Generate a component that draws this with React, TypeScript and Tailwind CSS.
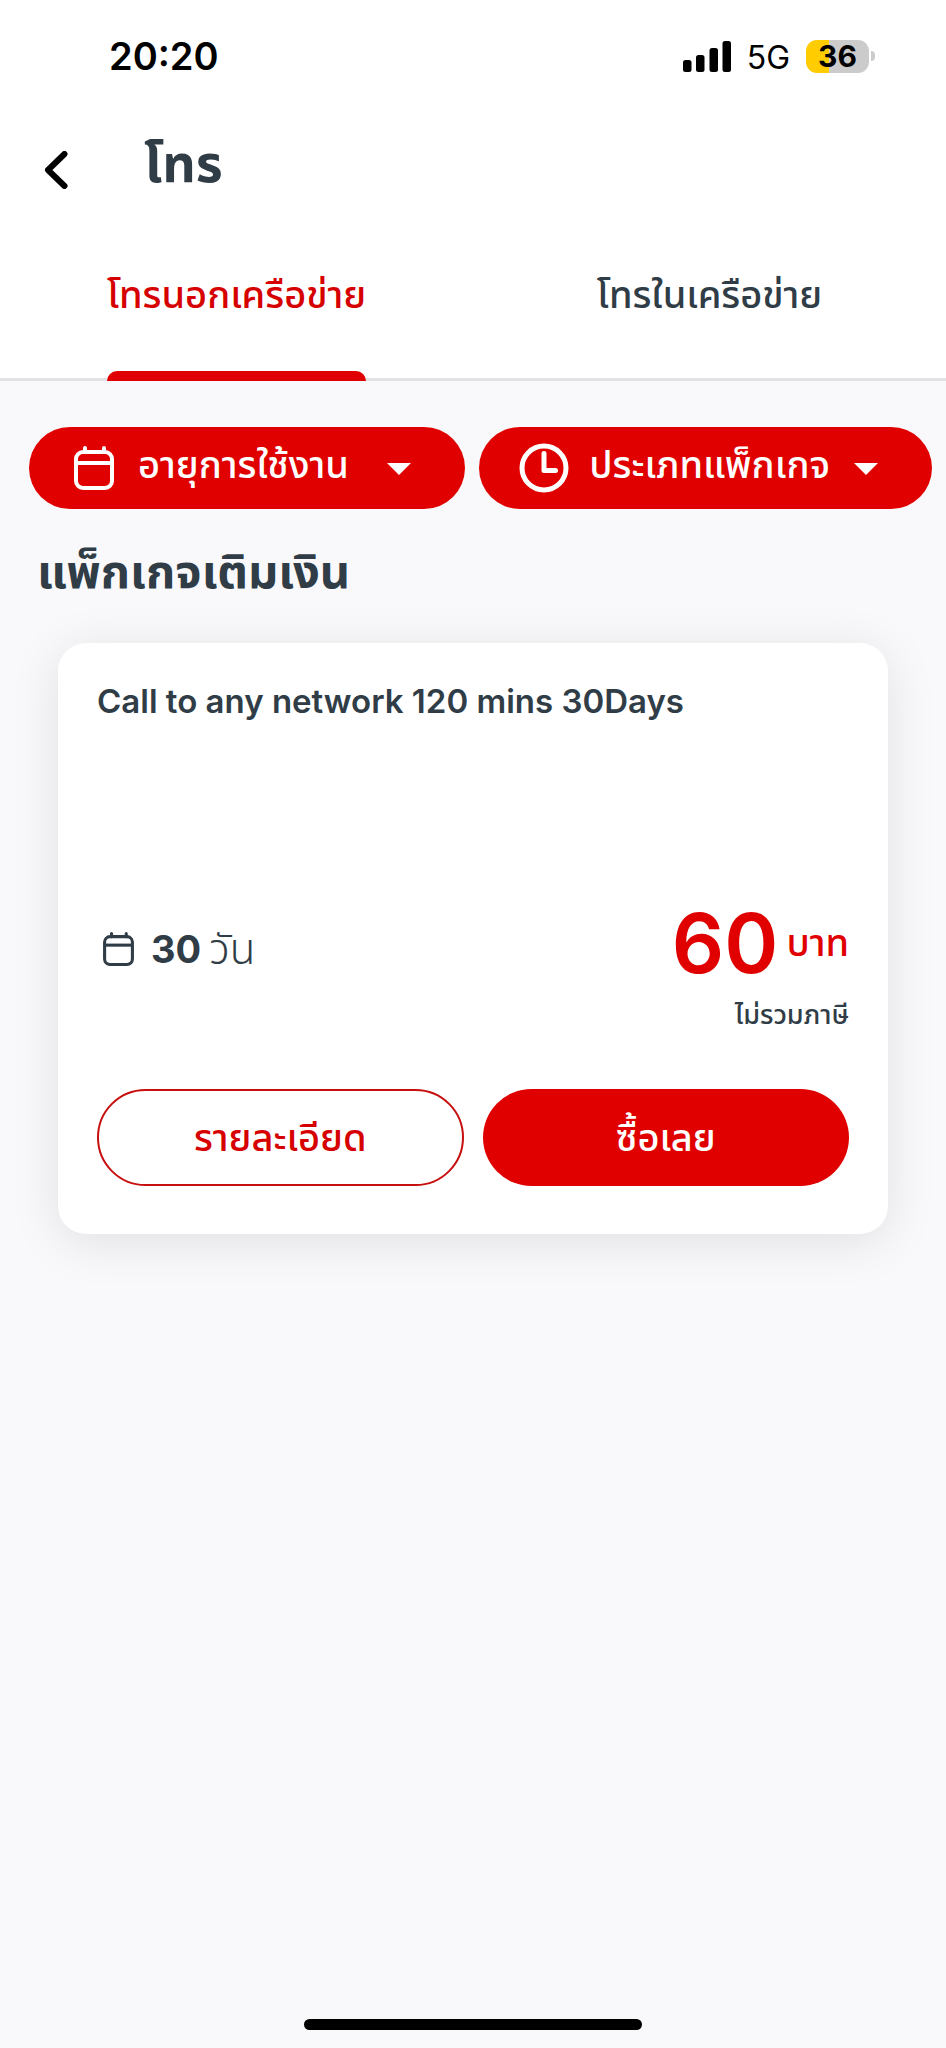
import { useState } from 'react';

const TABS = ['โทรนอกเครือข่าย', 'โทรในเครือข่าย'];

interface PackageInfo {
  name: string;
  days: number;
  price: number;
}

const PACKAGES: PackageInfo[] = [
  { name: 'Call to any network 120 mins 30Days', days: 30, price: 60 },
];

function CalendarIcon({ className, strokeWidth }: { className: string; strokeWidth: number }) {
  return (
    <svg viewBox="0 0 40 44" className={className} fill="none" stroke="currentColor" strokeWidth={strokeWidth} aria-hidden="true">
      <rect x="2" y="6" width="36" height="36" rx="7" />
      <path d="M2 17H38" />
      <path d="M11 6V2M30 6V2" strokeLinecap="round" />
    </svg>
  );
}

function ClockIcon() {
  return (
    <svg viewBox="0 0 50 50" className="h-[50px] w-[50px] shrink-0" fill="none" stroke="currentColor" strokeWidth="5" aria-hidden="true">
      <circle cx="25" cy="25" r="22" />
      <path d="M25 10.500V27.500H36.500" strokeLinecap="round" strokeLinejoin="round" />
    </svg>
  );
}

function CaretIcon() {
  return (
    <svg viewBox="0 0 24 12" className="mt-[2px] h-3 w-6 shrink-0" fill="currentColor" aria-hidden="true">
      <path d="M0 0H24L12 12Z" />
    </svg>
  );
}

function StatusBar() {
  return (
    <div className="flex h-28 items-center justify-between pr-[71px] pl-[109px] text-black">
      <span className="text-[38px] leading-none font-semibold">20:20</span>
      <div className="flex items-center">
        <svg viewBox="0 0 48 31" className="h-[31px] w-12" fill="currentColor" aria-hidden="true">
          <rect x="0" y="19" width="8.500" height="12" rx="2.500" />
          <rect x="13" y="14" width="8.500" height="17" rx="2.500" />
          <rect x="26.500" y="7" width="8.500" height="24" rx="2.500" />
          <rect x="39.500" y="0" width="8.500" height="31" rx="2.500" />
        </svg>
        <span className="ml-4 pt-1 text-[32px] leading-none">5G</span>
        <div className="ml-4 flex items-center">
          <div className="flex h-[33px] w-[63px] items-center justify-center rounded-[11px] bg-linear-to-r from-[#ffcc00] from-36% to-[#cbcbcb] to-36%">
            <span className="text-[30px] leading-none font-bold">36</span>
          </div>
          <div className="ml-[2px] h-[10px] w-1 rounded-r-full bg-[#cbcbcb]" />
        </div>
      </div>
    </div>
  );
}

function PackageCard({ item }: { item: PackageInfo }) {
  return (
    <article className="flex flex-col rounded-[28px] bg-white px-[39px] pt-[35px] pb-12 shadow-[0_8px_50px_rgba(0,0,0,0.1)]">
      <h3 className="min-h-[216px] text-[33px] leading-[46px] font-semibold">{item.name}</h3>
      <div className="flex items-center justify-between">
        <p className="flex items-center pt-[10px] pl-[6px] text-[38px] leading-none">
          <CalendarIcon className="mr-[17px] h-[34px] w-[31px]" strokeWidth={4} />
          <span className="mr-2 font-bold">{item.days}</span>
          <span className="text-[42px] font-light">วัน</span>
        </p>
        <p className="flex items-center text-[#e00000]">
          <span className="mr-2 text-[82px] leading-[100px] font-semibold">{item.price}</span>
          <span className="pb-1 text-[38px] leading-none font-medium">บาท</span>
        </p>
      </div>
      <p className="text-right text-[27px] leading-[42px] font-medium">ไม่รวมภาษี</p>
      <div className="mt-[53px] grid grid-cols-2 gap-[19px]">
        <button className="h-[97px] rounded-full border-2 border-[#c80f0f] text-[38px] font-medium text-[#d60000]">รายละเอียด</button>
        <button className="h-[97px] rounded-full bg-[#e00000] text-[38px] font-medium text-white">ซื้อเลย</button>
      </div>
    </article>
  );
}

export default function App() {
  const [activeTab, setActiveTab] = useState(0);

  return (
    <div className="flex min-h-screen flex-col bg-[#f9f9fc] font-[Inter,'Noto_Sans_Thai','Noto_Sans',sans-serif] text-[#303d47]">
      <header className="bg-white">
        <StatusBar />
        <div className="flex h-28 items-center pt-1 pl-11">
          <button aria-label="ย้อนกลับ" className="mr-[76px] text-black">
            <svg viewBox="0 0 24 38" className="h-[38px] w-6" fill="none" stroke="currentColor" strokeWidth="6" strokeLinecap="round" strokeLinejoin="round" aria-hidden="true">
              <path d="M20.500 3L4 19L20.500 35" />
            </svg>
          </button>
          <h1 className="pb-3 text-[52px] leading-none font-bold">โทร</h1>
        </div>
        <div role="tablist" className="grid h-[157px] grid-cols-2 border-b-[3px] border-[#e1e1e6]">
          {TABS.map((tab, index) => (
            <button
              key={tab}
              role="tab"
              aria-selected={index === activeTab}
              onClick={() => setActiveTab(index)}
              className="flex justify-center"
            >
              <span className={`relative flex h-[157px] items-center pb-4 text-[38px] font-medium ${index === activeTab ? 'text-[#d60000]' : ''}`}>
                {tab}
                {index === activeTab && <span className="absolute inset-x-0 bottom-0 h-[10px] rounded-t-[10px] bg-[#e00000]" />}
              </span>
            </button>
          ))}
        </div>
      </header>

      <main className="flex-1 pt-[46px]">
        <div className="flex gap-[14px] pr-[14px] pl-[29px]">
          <button className="flex h-[82px] grow items-center rounded-full bg-[#e00000] pr-[54px] pl-[45px] text-[38px] font-medium text-white">
            <CalendarIcon className="mr-6 h-11 w-10 shrink-0" strokeWidth={4} />
            <span className="grow pb-2 text-left">อายุการใช้งาน</span>
            <CaretIcon />
          </button>
          <button className="flex h-[82px] items-center rounded-full bg-[#e00000] pr-[54px] pl-10 text-[38px] font-medium text-white">
            <ClockIcon />
            <span className="mr-6 ml-5 pb-2">ประเภทแพ็กเกจ</span>
            <CaretIcon />
          </button>
        </div>

        <h2 className="mt-[30px] pl-[37px] text-[47px] leading-[64px] font-bold">แพ็กเกจเติมเงิน</h2>

        <section className="mt-10 flex flex-col gap-8 px-[58px]">
          {PACKAGES.map((item) => (
            <PackageCard key={item.name} item={item} />
          ))}
        </section>
      </main>

      <div className="mx-auto mb-[18px] h-[11px] w-[338px] rounded-full bg-black" />
    </div>
  );
}
